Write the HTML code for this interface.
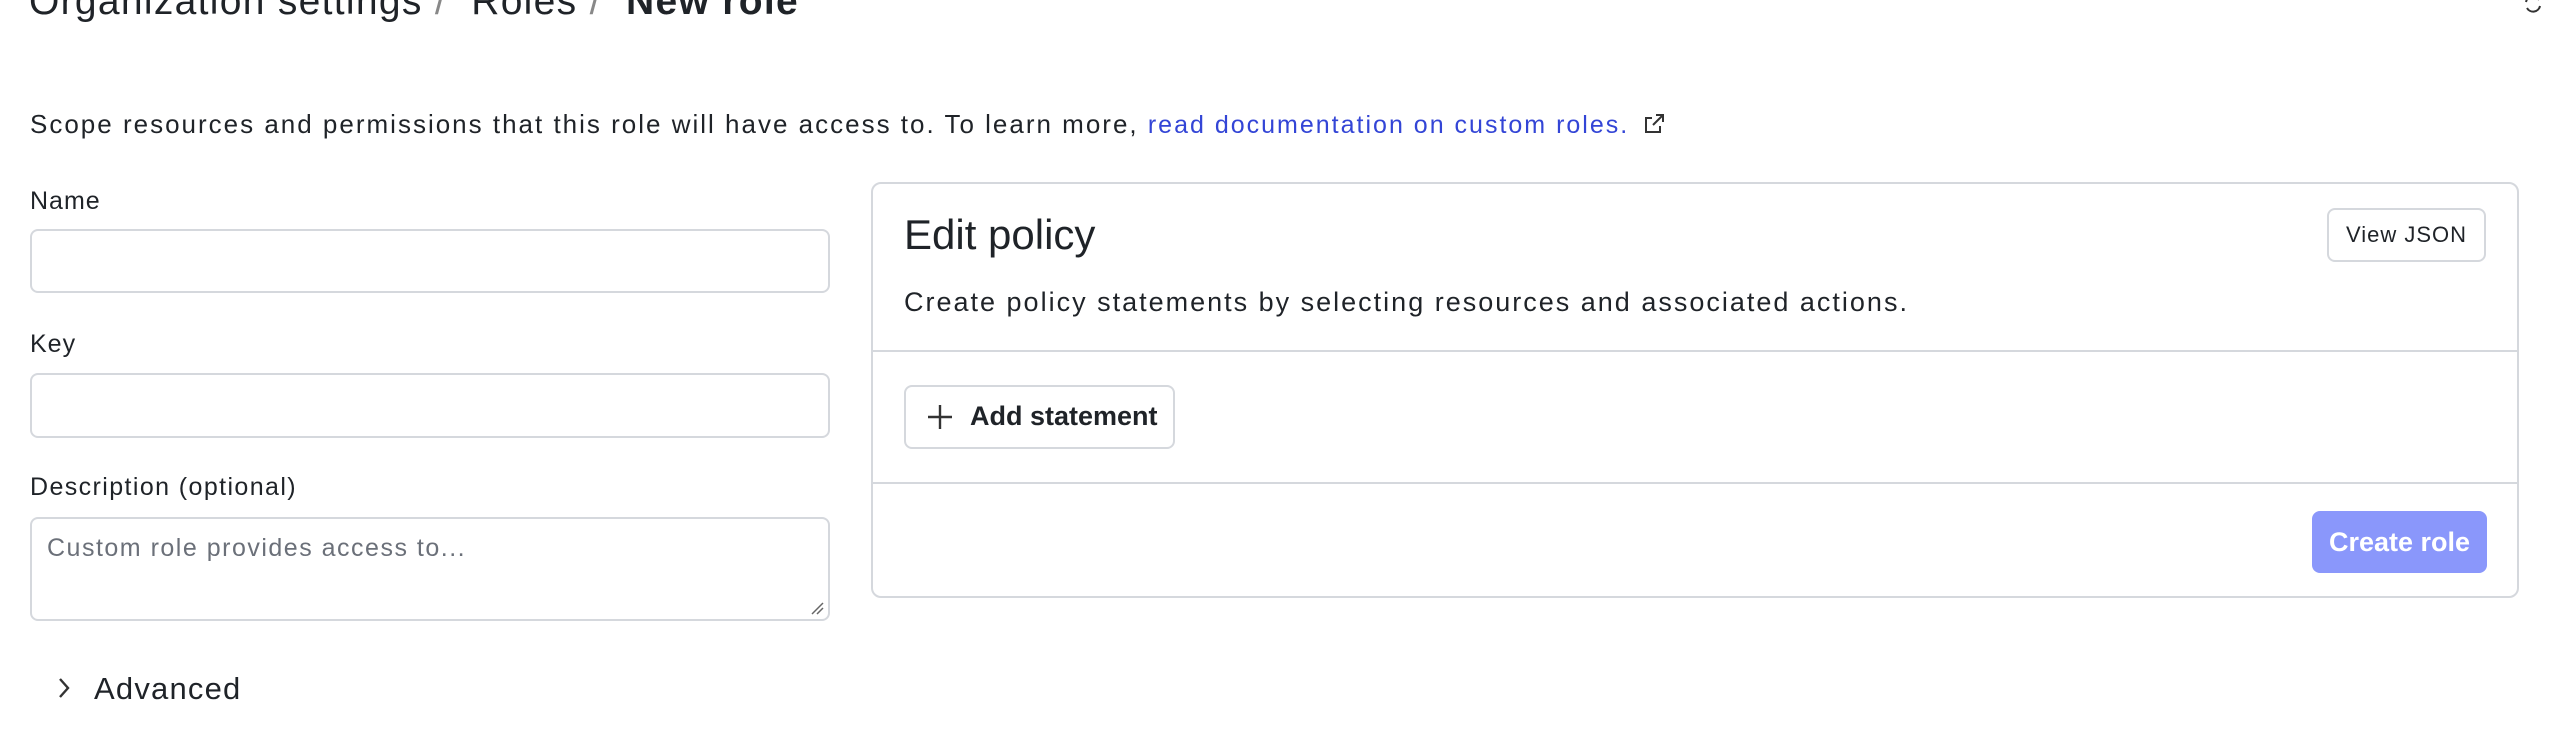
<!DOCTYPE html>
<html><head><meta charset="utf-8"><style>
*{box-sizing:border-box;margin:0;padding:0}
body{width:2550px;height:754px;overflow:hidden;background:#fff;font-family:"Liberation Sans",Arial,sans-serif;color:#1f2328;position:relative}
.a{position:absolute;white-space:nowrap}
.inp{position:absolute;border:2px solid #d5d8dd;border-radius:8px;background:#fff}
.lbl{font-size:25px;font-weight:500;letter-spacing:1px}
</style></head><body>
<div class="a" style="left:29px;top:-22px;font-size:39px;line-height:48px;color:#1f2328;letter-spacing:1.3px">Organization settings <span style="color:#888">/</span>&nbsp; Roles <span style="color:#888">/</span>&nbsp; <b style="font-weight:600">New role</b></div>
<svg class="a" style="left:2522px;top:-6px" width="22" height="20" viewBox="0 0 22 20"><path d="M4 8a7 7 0 0 1 13-2M18 12a7 7 0 0 1-13 2" stroke="#333" stroke-width="2" fill="none"/></svg>
<div class="a" style="left:30px;top:109px;font-size:26px;line-height:30px;letter-spacing:2px">Scope resources and permissions that this role will have access to. To learn more, <span style="color:#3345d6;font-size:25px">read documentation on custom roles.</span>
<svg width="24" height="24" viewBox="0 0 24 24" style="vertical-align:-3px;margin-left:4px"><path d="M14 3h7v7M21 3l-10 10M18 14v6H4V6h6" stroke="#333" stroke-width="2" fill="none"/></svg></div>
<div class="a lbl" style="left:30px;top:187px">Name</div>
<div class="inp" style="left:30px;top:229px;width:800px;height:64px"></div>
<div class="a lbl" style="left:30px;top:330px">Key</div>
<div class="inp" style="left:30px;top:373px;width:800px;height:65px"></div>
<div class="a lbl" style="left:30px;top:473px;letter-spacing:1.4px">Description (optional)</div>
<div class="inp" style="left:30px;top:517px;width:800px;height:104px"></div>
<div class="a" style="left:47px;top:534px;font-size:25px;color:#6b7079;letter-spacing:1.5px">Custom role provides access to...</div>
<svg class="a" style="left:810px;top:601px" width="14" height="14"><path d="M2 13L13 2M7 13l6-6" stroke="#666" stroke-width="1.5"/></svg>
<svg class="a" style="left:56px;top:676px" width="16" height="24"><path d="M4 3l8 9-8 9" stroke="#333" stroke-width="2.4" fill="none"/></svg>
<div class="a" style="left:94px;top:671px;font-size:31px;font-weight:500;letter-spacing:1.2px">Advanced</div>
<div class="a" style="left:871px;top:182px;width:1648px;height:416px;border:2px solid #d5d8dd;border-radius:10px"></div>
<div class="a" style="left:904px;top:211px;font-size:42px;font-weight:500">Edit policy</div>
<div class="a" style="left:2327px;top:208px;width:159px;height:54px;border:2px solid #d5d8dd;border-radius:8px;font-size:22px;line-height:50px;text-align:center;letter-spacing:1px">View JSON</div>
<div class="a" style="left:904px;top:287px;font-size:27px;letter-spacing:2px">Create policy statements by selecting resources and associated actions.</div>
<div class="a" style="left:871px;top:350px;width:1648px;height:2px;background:#d5d8dd"></div>
<div class="a" style="left:904px;top:385px;width:271px;height:64px;border:2px solid #d5d8dd;border-radius:8px"></div>
<svg class="a" style="left:927px;top:404px" width="26" height="26"><path d="M13 1v24M1 13h24" stroke="#333" stroke-width="2.4"/></svg>
<div class="a" style="left:970px;top:401px;font-size:27px;font-weight:700">Add statement</div>
<div class="a" style="left:871px;top:482px;width:1648px;height:2px;background:#d5d8dd"></div>
<div class="a" style="left:2312px;top:511px;width:175px;height:62px;background:#8a97fb;border-radius:8px;color:#fff;font-size:27px;font-weight:700;line-height:62px;text-align:center">Create role</div>
</body></html>
